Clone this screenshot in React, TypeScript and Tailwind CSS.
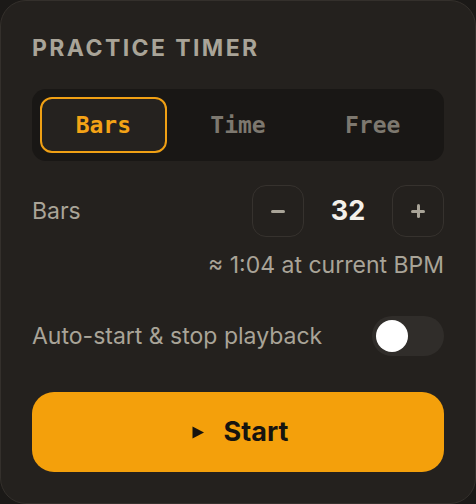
import React from "react";

export default function App() {
  const sans = { fontFamily: "Inter, 'Liberation Sans', sans-serif" };
  const mono = { fontFamily: "'DejaVu Sans Mono', 'Liberation Mono', monospace" };
  return (
    <div className="w-[476px] h-[504px] bg-[#1b1917]" style={sans}>
      <div className="w-[476px] h-[504px] rounded-[26px] border border-[#34302c] bg-[#24211e] px-[31px] pt-[34px] flex flex-col">
        <div className="text-[23px] leading-[26px] font-bold tracking-[0.105em] text-[#a9a498]">PRACTICE TIMER</div>

        <div className="mt-[28px] h-[72px] rounded-[14px] bg-[#191715] p-2 grid grid-cols-3 gap-2" style={mono}>
          <div className="rounded-[12px] border-2 border-[#f0a014] bg-[#25221f] flex items-center justify-center text-[23px] font-bold text-[#f4a316]">Bars</div>
          <div className="rounded-[12px] flex items-center justify-center text-[23px] font-bold text-[#7d786f]">Time</div>
          <div className="rounded-[12px] flex items-center justify-center text-[23px] font-bold text-[#7d786f]">Free</div>
        </div>

        <div className="mt-[24px] flex items-center justify-between">
          <div className="text-[23px] leading-[28px] text-[#a9a498]">Bars</div>
          <div className="flex items-center gap-3">
            <div className="w-[52px] h-[52px] rounded-[14px] border border-[#36322e] flex items-center justify-center">
              <div className="w-[14px] h-[3px] bg-[#a9a498] rounded-sm" />
            </div>
            <div className="w-[64px] text-center text-[27px] font-bold text-[#f3f0ea]">32</div>
            <div className="w-[52px] h-[52px] rounded-[14px] border border-[#36322e] flex items-center justify-center relative">
              <div className="w-[14px] h-[3px] bg-[#a9a498] rounded-sm" />
              <div className="absolute w-[3px] h-[14px] bg-[#a9a498] rounded-sm" />
            </div>
          </div>
        </div>

        <div className="mt-[14px] text-right text-[23px] leading-[28px] text-[#a9a498]">≈ 1:04 at current BPM</div>

        <div className="mt-[37px] flex items-center justify-between">
          <div className="text-[23px] leading-[28px] text-[#a9a498]">Auto-start &amp; stop playback</div>
          <div className="w-[72px] h-[40px] rounded-full bg-[#302d2a] flex items-center px-1">
            <div className="w-[32px] h-[32px] rounded-full bg-white" />
          </div>
        </div>

        <div className="mt-[36px] h-[80px] rounded-[22px] bg-[#f4a00b] flex items-center justify-center">
          <svg width="12" height="13" viewBox="0 0 12 13" className="ml-[4px]"><path d="M0.5 0.5 L12 6.5 L0.5 12.5 Z" fill="#17140f" /></svg>
          <div className="ml-[20px] text-[27px] font-bold text-[#17140f]">Start</div>
        </div>
      </div>
    </div>
  );
}
